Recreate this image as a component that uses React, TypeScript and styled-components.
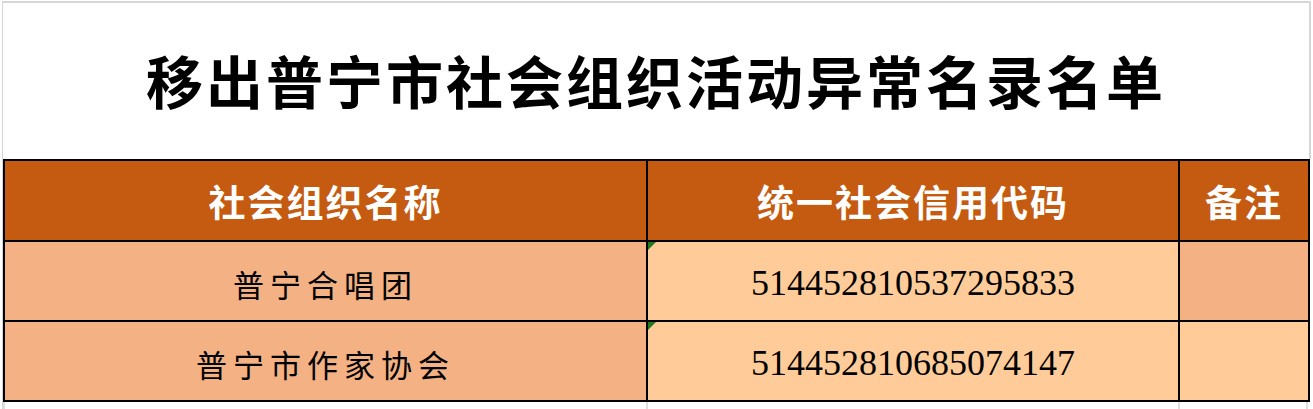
import React from "react";
import styled, { createGlobalStyle } from "styled-components";

const GlobalStyle = createGlobalStyle`
  html, body {
    margin: 0;
    padding: 0;
    background: #ffffff;
  }
  body {
    padding: 1px 0 0 2px;
    font-family: "Noto Sans CJK SC", "Noto Sans", sans-serif;
  }
`;

const Sheet = styled.div`
  width: 1308px;
  border-top: 2px solid #d6d6d6;
  border-left: 1px solid #d6d6d6;
`;

const TitleRow = styled.div`
  display: flex;
  align-items: center;
  justify-content: center;
  height: 156px;
  border-right: 2px solid #d6d6d6;
  padding-bottom: 4px;
  box-sizing: border-box;
`;

const Title = styled.h1`
  margin: 0;
  font-family: "Noto Sans CJK SC", sans-serif;
  font-weight: 700;
  font-size: 57px;
  letter-spacing: 3px;
  color: #000;
  line-height: 1;
`;

const Table = styled.div`
  display: grid;
  grid-template-columns: 641px 530px 128px;
  grid-template-rows: 79px 78px 78px;
  gap: 2px;
  padding: 2px;
  width: 1307px;
  box-sizing: border-box;
  background: #000;
`;

const HeadCell = styled.div`
  display: flex;
  align-items: center;
  justify-content: center;
  background: #c55a11;
  color: #ffffff;
  font-family: "Noto Sans CJK SC", sans-serif;
  font-weight: 700;
  font-size: 37px;
  letter-spacing: 2px;
`;

const Cell = styled.div<{ $bg: string }>`
  position: relative;
  display: flex;
  align-items: center;
  justify-content: center;
  background: ${(p) => p.$bg};
  color: #000;
  padding-top: 4px;
  box-sizing: border-box;
`;

const NameText = styled.span`
  font-family: "Noto Sans CJK SC", sans-serif;
  font-size: 31px;
  letter-spacing: 6px;
`;

const CodeText = styled.span`
  font-family: "Liberation Serif", "Times New Roman", serif;
  font-size: 36px;
`;

const ErrorMark = styled.span`
  position: absolute;
  top: 0;
  left: 0;
  width: 0;
  height: 0;
  border-top: 8px solid #1f7a1f;
  border-right: 8px solid transparent;
`;

const Filler = styled.div`
  display: grid;
  grid-template-columns: 643px 532px 130px;
  height: 8px;
  width: 1307px;

  & > div {
    border-left: 2px solid #e0e0e0;
  }
  & > div:last-child {
    border-right: 2px solid #e0e0e0;
  }
`;

const NAME_BG = "#f4b183";
const CODE_BG = "#ffcc99";

const rows = [
  { name: "普宁合唱团", code: "514452810537295833", remark: NAME_BG },
  { name: "普宁市作家协会", code: "514452810685074147", remark: CODE_BG },
];

export default function App() {
  return (
    <>
      <GlobalStyle />
      <Sheet>
        <TitleRow>
          <Title>移出普宁市社会组织活动异常名录名单</Title>
        </TitleRow>
        <Table>
          <HeadCell>社会组织名称</HeadCell>
          <HeadCell>统一社会信用代码</HeadCell>
          <HeadCell>备注</HeadCell>
          {rows.map((r) => (
            <React.Fragment key={r.code}>
              <Cell $bg={NAME_BG}>
                <NameText>{r.name}</NameText>
              </Cell>
              <Cell $bg={CODE_BG}>
                <ErrorMark />
                <CodeText>{r.code}</CodeText>
              </Cell>
              <Cell $bg={r.remark} />
            </React.Fragment>
          ))}
        </Table>
        <Filler>
          <div />
          <div />
          <div />
        </Filler>
      </Sheet>
    </>
  );
}
